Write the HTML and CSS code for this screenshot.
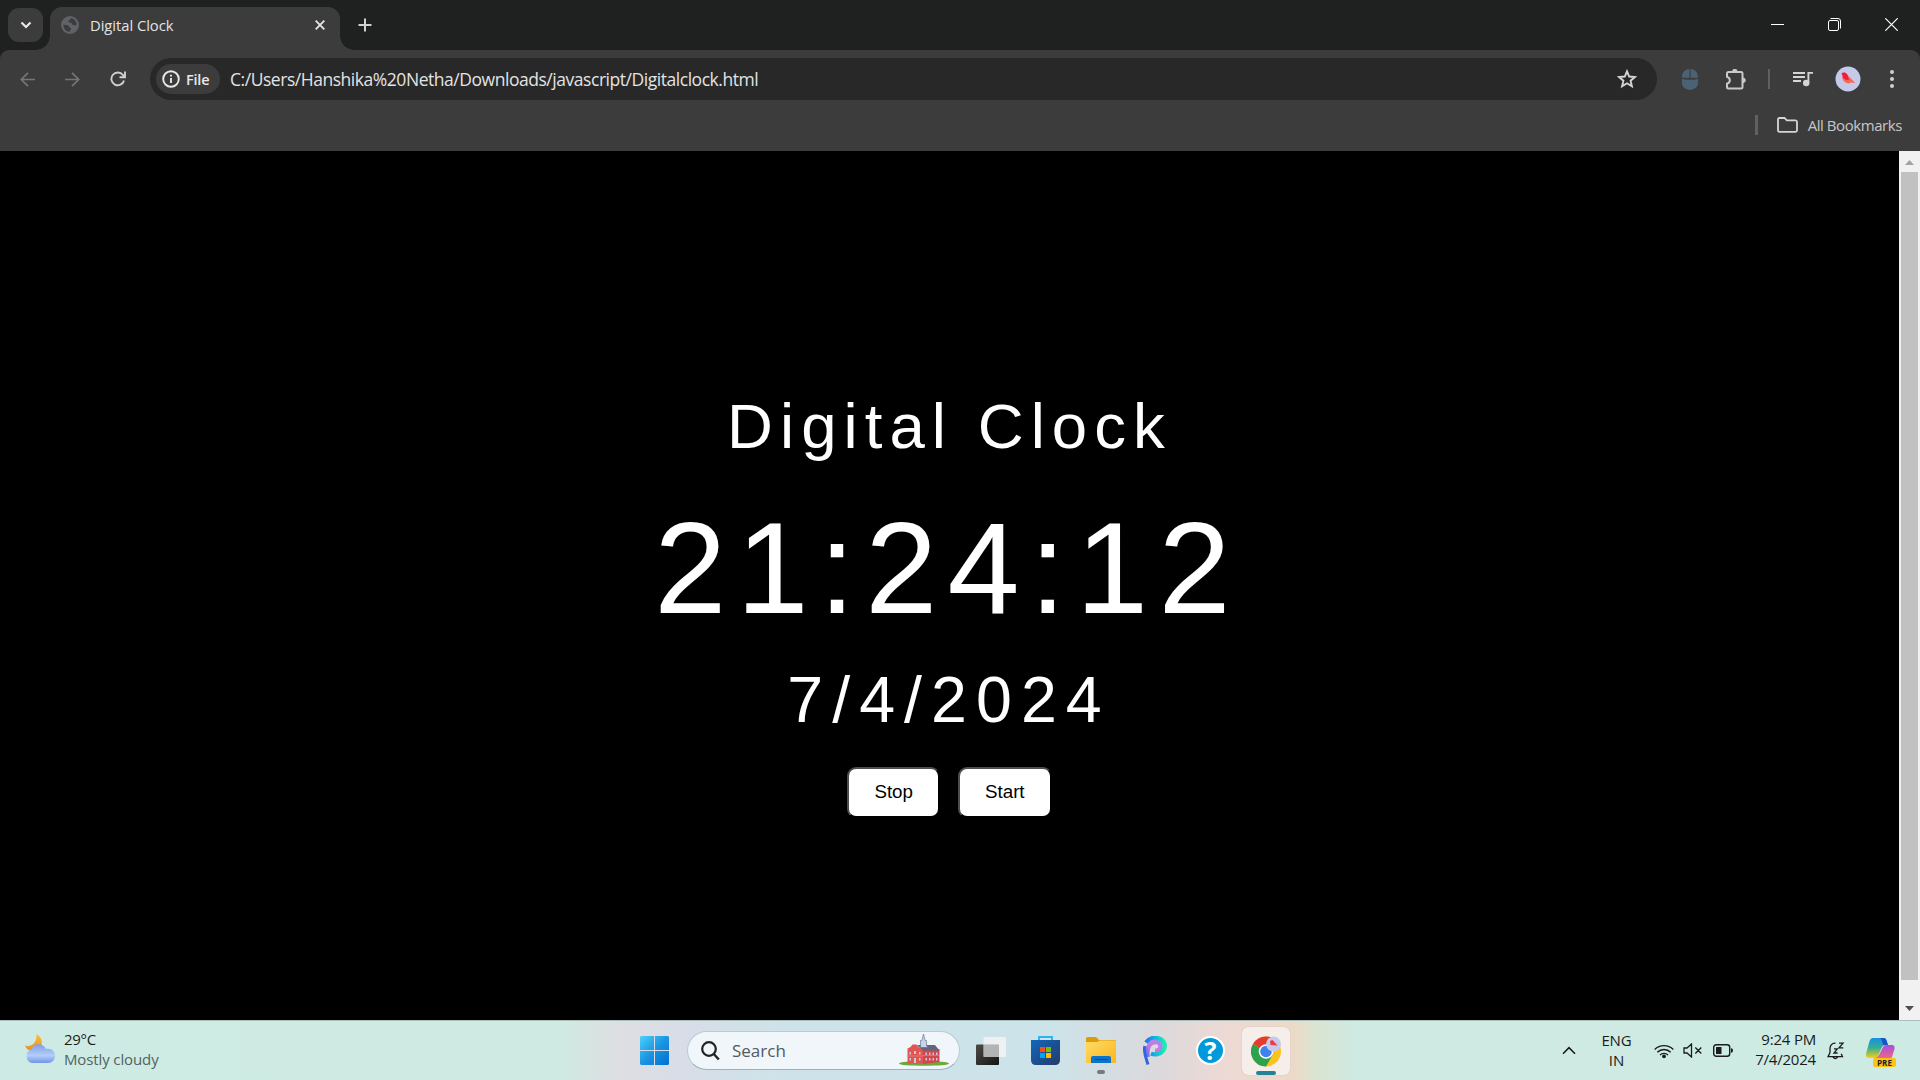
FILE: index.html
```html
<!DOCTYPE html>
<html lang="en">
<head>
<meta charset="utf-8">
<title>Digital Clock</title>
<link rel="stylesheet" href="styles.css">
</head>
<body>
<header class="tabstrip">
  <div class="tab-search"><svg width="12" height="8" viewBox="0 0 12 8"><path d="M1.5 1.5 6 6l4.500-4.500" fill="none" stroke="#e8e8e8" stroke-width="2.200"/></svg></div>
  <div class="tab">
    <svg class="globe" width="18" height="18" viewBox="0 0 18 18"><circle cx="9" cy="9" r="9" fill="#5f6368"/><path d="M2.500 8.500C4 9 7.500 8.800 8 10.500c.3 1.500 1.800.8 2 2.200.1 1-1.200 1.300-1.200 3C5 16 2.200 12.500 2.500 8.500zM9.800 2.200c-1 .8-.8 1.800-2 2.300-1 .4-.4 2 .8 2 1.300 0 2.200.1 2.400 1.500.2 1.200 2 1.400 4.600.9C15.700 5.200 13 2.400 9.800 2.200z" fill="#3c3c3c"/></svg>
    <span class="tab-title">Digital Clock</span>
    <svg class="tab-close" width="10" height="10" viewBox="0 0 10 10"><path d="M.7.7l8.600 8.600M9.300.7.7 9.300" stroke="#e3e3e3" stroke-width="1.900"/></svg>
  </div>
  <svg class="new-tab" width="14" height="14" viewBox="0 0 14 14"><path d="M7 .5v13M.5 7h13" stroke="#d0d0d0" stroke-width="2"/></svg>
  <div class="window-buttons">
    <svg width="13" height="13" viewBox="0 0 13 13"><path d="M0 6.500h13" stroke="#fff"/></svg>
    <svg width="13" height="13" viewBox="0 0 13 13"><rect x=".5" y="2.500" width="10" height="10" rx="1.500" fill="none" stroke="#fff"/><path d="M2.500.5H10A2.500 2.500 0 0 1 12.500 3v7.500" fill="none" stroke="#fff"/></svg>
    <svg width="13" height="13" viewBox="0 0 13 13"><path d="M.3.3l12.400 12.400M12.700.3.3 12.700" stroke="#fff" stroke-width="1.200"/></svg>
  </div>
</header>
<nav class="toolbar">
  <div class="nav-icons">
    <svg width="15" height="15" viewBox="0 0 15 15"><path d="M15 7.500H1.500M8 .8 1.300 7.500 8 14.200" fill="none" stroke="#757575" stroke-width="1.700"/></svg>
    <svg width="15" height="15" viewBox="0 0 15 15"><path d="M0 7.500h13.500M7 .8l6.700 6.700L7 14.200" fill="none" stroke="#757575" stroke-width="1.700"/></svg>
    <svg width="16" height="16" viewBox="0 0 16 16"><path d="M14 9.500A6.400 6.400 0 1 1 12.900 4L14.800 6M9.500 6.200h5.500V.6" fill="none" stroke="#d0d0d0" stroke-width="1.900"/></svg>
  </div>
  <div class="omnibox">
    <div class="chip">
      <svg width="18" height="18" viewBox="0 0 18 18"><circle cx="9" cy="9" r="7.800" fill="none" stroke="#e8e8e8" stroke-width="1.900"/><path d="M9 8v5M9 4.700v1.900" stroke="#e8e8e8" stroke-width="1.900"/></svg>
      <span>File</span>
    </div>
    <span class="url">C:/Users/Hanshika%20Netha/Downloads/javascript/Digitalclock.html</span>
    <svg class="star" width="20" height="20" viewBox="0 0 20 20"><path d="M10 2.300l2.200 5.200 5.700.5-4.300 3.700 1.300 5.500L10 14.300l-4.900 2.900 1.300-5.500L2.100 8l5.700-.5z" fill="none" stroke="#d5d5d5" stroke-width="1.900"/></svg>
  </div>
  <svg class="mouse" width="16" height="21" viewBox="0 0 16 21"><path d="M7.500 0v8.800H0C0 3 3 .3 7.500 0zM8.600 0v8.800H16C16 3 13 .3 8.600 0z" fill="#4b6274"/><path d="M0 9.900c5 1.200 11 1.200 16 0V14c0 9-16 9-16 0z" fill="#4b6274"/></svg>
  <svg class="puzzle" width="22" height="21" viewBox="0 0 22 21"><path d="M2 4.500q0-1.500 1.500-1.500H16q1.500 0 1.500 1.500V18q0 1.500-1.500 1.500H3.500Q2 19.500 2 18v-3.300c3.800-1.200 3.800-5.800 0-7z" fill="none" stroke="#c9c9c9" stroke-width="2"/><path d="M7.500 2.500a2.300 2.300 0 0 1 4.600 0zM18 9a2.300 2.300 0 0 1 0 4.600z" fill="#c9c9c9" stroke="#c9c9c9"/></svg>
  <i class="bar"></i>
  <svg class="music" width="20" height="16" viewBox="0 0 20 16"><path d="M0 2h12M0 6h12M0 10h8M15.400 12V1.900H20" fill="none" stroke="#d5d5d5" stroke-width="1.900"/><circle cx="13.200" cy="12" r="3.200" fill="#d5d5d5"/></svg>
  <svg class="avatar" width="26" height="26" viewBox="0 0 26 26"><circle cx="13" cy="13" r="12.500" fill="#c5caea"/><path d="M6.500 7.500c2-2 5-1.200 6 1.500l5.800 6 1.700 2-4-.5-2.500 1C9 16.800 6.500 13 7.500 9.500z" fill="#fa6650"/><path d="M6.500 7.500c2-2 5-1.200 6 1.500l1.500 5C9 14 8 12 7.500 9.500z" fill="#e7213f"/></svg>
  <svg class="dots" width="4" height="18" viewBox="0 0 4 18"><g fill="#d0d0d0"><circle cx="2" cy="2" r="2"/><circle cx="2" cy="9" r="2"/><circle cx="2" cy="16" r="2"/></g></svg>
</nav>
<div class="bookmarks">
  <i class="bar"></i>
  <svg width="21" height="16" viewBox="0 0 21 16"><path d="M1 2.500Q1 1 2.500 1h5l2.300 2.400h8.700Q20 3.400 20 5v8.300q0 1.500-1.500 1.500h-16Q1 14.800 1 13.300z" fill="none" stroke="#d5d5d5" stroke-width="1.800"/></svg>
  <span>All Bookmarks</span>
</div>
<div class="viewport">
  <main class="clock">
    <div class="heading">Digital Clock</div>
    <div class="time">21:24:12</div>
    <div class="date">7/4/2024</div>
    <div class="actions"><button>Stop</button><button>Start</button></div>
  </main>
  <div class="scrollbar">
    <svg width="21" height="21" viewBox="0 0 21 21"><path d="M6 14l4.500-5 4.500 5z" fill="#a3a3a3"/></svg>
    <div class="thumb"></div>
    <svg width="21" height="21" viewBox="0 0 21 21"><path d="M6 7l4.500 5L15 7z" fill="#505050"/></svg>
  </div>
</div>
<footer class="taskbar">
  <div class="weather">
    <svg width="32" height="32" viewBox="0 0 32 32"><defs><linearGradient id="moon" x1="0" y1="0" x2="0" y2="1"><stop offset="0" stop-color="#f5c33b"/><stop offset="1" stop-color="#f08a24"/></linearGradient><linearGradient id="cloud" x1="0" y1="0" x2="0" y2="1"><stop offset="0" stop-color="#7fa0e6"/><stop offset=".6" stop-color="#b4cdfa"/><stop offset="1" stop-color="#6f96e4"/></linearGradient></defs><path d="M12.500 1c5 3 6.500 8 4.500 13L8 18c-4-.5-6-2.500-7-5.500 7 2 12-3 11.500-11.500z" fill="url(#moon)"/><path d="M8 30a7 7 0 0 1-.5-13.500C9 10 19 9.500 22 16c6-1 9 3 9 7 0 4-3 7-7 7z" fill="url(#cloud)"/></svg>
    <div><div class="temp">29°C</div><div class="sky">Mostly cloudy</div></div>
  </div>
  <div class="apps">
    <svg class="start" width="30" height="30" viewBox="0 0 30 30"><defs><linearGradient id="win" x1="0" y1="0" x2="1" y2="1"><stop offset="0" stop-color="#4cd0fc"/><stop offset=".5" stop-color="#1a95e3"/><stop offset="1" stop-color="#0070d0"/></linearGradient></defs><path d="M1 0h13v14H0V1zM15 0h13l1 1v13H15zM0 15h14v14H1l-1-1zM15 15h14v13l-1 1H15z" fill="url(#win)"/></svg>
    <div class="search">
      <svg width="19" height="20" viewBox="0 0 19 20"><circle cx="8" cy="8" r="6.800" fill="none" stroke="#222" stroke-width="2.200"/><path d="M12.800 13l5 5.500" stroke="#222" stroke-width="2.400"/></svg>
      <span>Search</span>
      <svg class="hall" width="52" height="33" viewBox="0 0 52 33"><ellipse cx="26" cy="29.500" rx="25" ry="2.300" fill="#6ba93a"/><path d="M9.500 14.500l3-1.500 2-2.500h4l2 2.500 4.500 2v14.500H9.500z" fill="#e25550"/><path d="M25 15h16.500v13L25 30z" fill="#d4464a"/><path d="M19 11h18l4.500 5.500L25 16.500z" fill="#62657f"/><path d="M22.500 12V6.500h1.300L25.500 0l1.700 6.500h1.300v5l1.500 2h-8z" fill="#c9d3e8" stroke="#59678c" stroke-width=".6"/><path d="M9.500 22h15.500M25 21.500h16.500" stroke="#f08a80" stroke-width=".6"/><g fill="#c7cbe0"><path d="M11.500 18h1.500v2.500h-1.500zM16 17h2v3h-2zM21 18h1.500v2.500H21zM11.500 24h1.500v2.500h-1.500zM16 24h2v5h-2zM21 24h1.500v2.500H21zM27.500 18.500H29V21h-1.500zM31 18.500h1.500V21H31zM34.500 18.500H36V21h-1.500zM38 18.500h1.500V21H38zM27.500 24H29v2.500h-1.500zM31 24h1.500v2.500H31zM34.500 24H36v2.500h-1.500zM38 24h1.500v2.500H38z"/></g></svg>
    </div>
    <svg class="taskview" width="30" height="28" viewBox="0 0 30 28"><defs><linearGradient id="tv" x1="0" y1="0" x2="1" y2="1"><stop offset="0" stop-color="#4b4b47"/><stop offset="1" stop-color="#151515"/></linearGradient></defs><rect y="7.500" width="23" height="20.500" rx="1" fill="url(#tv)"/><rect x="7.500" width="22.500" height="20" rx="1" fill="#f4f4f4" opacity=".82"/><path d="M7.500 7.500H23V20H7.500z" fill="#a5a5a5" opacity=".65"/></svg>
    <svg class="store" width="29" height="29" viewBox="0 0 29 29"><defs><linearGradient id="st" x1="0" y1="0" x2="1" y2="1"><stop offset="0" stop-color="#1267bd"/><stop offset="1" stop-color="#263a68"/></linearGradient></defs><path d="M8 6V1h13v5" fill="none" stroke="#2bb7ee" stroke-width="2"/><path d="M0 4h29v20q0 5-5 5H5q-5 0-5-5z" fill="url(#st)"/><path d="M9 11h5v5H9z" fill="#f25022"/><path d="M15 11h5v5h-5z" fill="#7fba00"/><path d="M9 17h5v5H9z" fill="#00a4ef"/><path d="M15 17h5v5h-5z" fill="#ffb900"/></svg>
    <div class="app folder"><svg width="30" height="27" viewBox="0 0 30 27"><defs><linearGradient id="fo" x1="0" y1="0" x2="1" y2="1"><stop offset="0" stop-color="#ffdb66"/><stop offset="1" stop-color="#fbb51e"/></linearGradient></defs><path d="M0 1.500Q0 0 1.500 0H10l3 3h17v8H0z" fill="#dd9b0a"/><path d="M0 5h11l3-1.500h16V26H0z" fill="url(#fo)"/><path d="M5 26v-5q0-2 2-2h16q2 0 2 2v5z" fill="#0b73c9"/><path d="M9 22.500h12.500" stroke="#064b90"/></svg><i></i></div>
    <svg class="loop" width="24" height="29" viewBox="0 0 24 29"><defs><linearGradient id="lo" x1="0" y1="0" x2="1" y2="0"><stop offset="0" stop-color="#2a6fe8"/><stop offset=".5" stop-color="#11b8e0"/><stop offset="1" stop-color="#17f0b0"/></linearGradient><linearGradient id="lp" x1="0" y1="1" x2="1" y2="0"><stop offset="0" stop-color="#5a78ea"/><stop offset=".5" stop-color="#d573dd"/><stop offset="1" stop-color="#a08af0"/></linearGradient></defs><path d="M4.500 21C3.500 11 7 6 12.500 6c4.500 0 6 3.500 4.500 6.500-1 2-3 2.500-5 2.300" fill="none" stroke="url(#lp)" stroke-width="4.500"/><path d="M3 6.500C7 1 12.500 1.200 15.500 2.200c6.500 2 8 8.300 4.500 12.800-2.800 3.500-8 4.200-12 2.600" fill="none" stroke="url(#lo)" stroke-width="4.200"/><path d="M5 28.500C3.500 23 .2 17 1.800 10" fill="none" stroke="#3563e6" stroke-width="3"/></svg>
    <div class="help">?</div>
    <div class="chrome"><svg width="31" height="31" viewBox="0 0 31 31"><circle cx="15" cy="15.500" r="15" fill="#fcc31e"/><path d="M15 15.500L2 8A15 15 0 0 1 28 8z" fill="#e33b2e"/><path d="M15 15.500L2 8A15 15 0 0 0 15 30.500L21.500 19z" fill="#2da14b"/><circle cx="15" cy="15.500" r="7.300" fill="#fff"/><circle cx="15" cy="15.500" r="5.800" fill="#3f82ee"/><circle cx="22.500" cy="8" r="7.500" fill="#c5caea"/><path d="M19 5l2.500-1 5 5.500-7-.5z" fill="#ef3946"/></svg><i></i></div>
  </div>
  <div class="tray">
    <svg class="chevron" width="14" height="9" viewBox="0 0 14 9"><path d="M1 7.700L7 1.600l6 6.100" fill="none" stroke="#1b1b1b" stroke-width="1.600"/></svg>
    <div class="lang">ENG<br>IN</div>
    <svg class="wifi" width="20" height="16" viewBox="0 0 20 16"><g fill="none" stroke="#1b1b1b" stroke-width="1.400"><path d="M.7 6.500a13 13 0 0 1 18.600 0M3.300 9.300a9.400 9.400 0 0 1 13.400 0M6 12a5.700 5.700 0 0 1 8 0"/></g><circle cx="10" cy="13.300" r="1.900" fill="#1b1b1b"/></svg>
    <svg class="mute" width="19" height="15" viewBox="0 0 19 15"><path d="M1 5h3l4.500-4v13L4 10H1zM12.300 4.500l6 6M18.300 4.500l-6 6" fill="none" stroke="#1b1b1b" stroke-width="1.300"/></svg>
    <svg class="battery" width="20" height="13" viewBox="0 0 20 13"><rect x=".7" y=".7" width="16" height="11.600" rx="2.500" fill="none" stroke="#1b1b1b" stroke-width="1.400"/><rect x="3" y="3" width="5.500" height="7" rx=".5" fill="#1b1b1b"/><path d="M18 4.200q2 0 2 2.300t-2 2.300z" fill="#1b1b1b"/></svg>
    <div class="stamp">9:24 PM<br>7/4/2024</div>
    <svg class="bell" width="18" height="18" viewBox="0 0 18 18"><path d="M8.500 1.200C4.500 1 3 4 3 6.500v4L1 14.700h14.500l-1.300-3M6 15.200q2.300 2.800 4.600 0M7 6.800h3.300L7 11h3.600M12 1.200h4L12 5.800h4.300" fill="none" stroke="#1b1b1b" stroke-width="1.300"/></svg>
    <div class="copilot"><svg width="29" height="22" viewBox="0 0 29 22"><defs><linearGradient id="ca" x1="0" y1="0" x2="0" y2="1"><stop offset="0" stop-color="#178ee8"/><stop offset=".5" stop-color="#38af8e"/><stop offset="1" stop-color="#f8cf16"/></linearGradient><linearGradient id="cb" x1="0" y1="0" x2="0" y2="1"><stop offset="0" stop-color="#a84ee3"/><stop offset="1" stop-color="#f76c75"/></linearGradient></defs><path d="M7 0h11q2 0 3 4l1 3q-5-1-7 4l-3 7q-1 2-3 2H3q-4 0-3-4L3 5q1-5 4-5z" fill="url(#ca)"/><path d="M14 0h4q2 0 3 4l1 3h-5q-1-6-3-7z" fill="#1755c8"/><path d="M20 7h6q3 0 2.500 4L26 19q-1 3-4 3H11q-3 0-3-2 4 0 6-5l3-6q1-2 3-2z" fill="url(#cb)"/></svg><b>PRE</b></div>
  </div>
</footer>
</body>
</html>
```
FILE: styles.css
```css
* { box-sizing: border-box; }
body { margin: 0; width: 1920px; height: 1080px; overflow: hidden; display: flex; flex-direction: column; background: #1f2120; font-family: "Open Sans", "Noto Sans", sans-serif; }
svg { display: block; flex: none; }
span, .sky, .temp { white-space: nowrap; }

.tabstrip { height: 50px; flex: none; display: flex; padding-left: 8px; }
.tab-search { width: 35px; height: 34px; margin: 8px 7px 0 0; border-radius: 11px; background: #3c3c3c; display: grid; place-items: center; }
.tab { position: relative; width: 290px; height: 43px; margin-top: 7px; border-radius: 12px 12px 0 0; background: #3c3c3c; display: flex; align-items: center; padding: 0 15px 7px 11px; }
.tab::before, .tab::after { content: ""; position: absolute; bottom: 0; width: 14px; height: 14px; }
.tab::before { left: -14px; background: radial-gradient(circle at 0 0, transparent 13.500px, #3c3c3c 14px); }
.tab::after { right: -14px; background: radial-gradient(circle at 100% 0, transparent 13.500px, #3c3c3c 14px); }
.tab-title { margin-left: 11px; font-size: 14.800px; letter-spacing: -.05px; color: #e3e3e3; flex: 1; }
.new-tab { margin: 18px 0 0 18px; }
.window-buttons { margin: 18px 22px 0 auto; display: flex; gap: 44px; }

.toolbar { height: 58px; flex: none; display: flex; align-items: center; background: #3c3c3c; border-radius: 9px 9px 0 0; padding-left: 20px; }
.nav-icons { display: flex; align-items: center; gap: 30px; width: 130px; }
.omnibox { width: 1507px; height: 42px; border-radius: 21px; background: #282828; display: flex; align-items: center; padding: 0 20px 0 6px; }
.chip { width: 64px; height: 30px; border-radius: 15px; background: #3c3c3c; display: flex; align-items: center; padding-left: 6px; gap: 6px; color: #e8e8e8; font-size: 14.500px; font-weight: 600; letter-spacing: -.2px; }
.url { flex: 1; margin-left: 10px; font-size: 17.500px; letter-spacing: -.46px; color: #e3e3e3; }
.mouse { margin-left: 25px; }
.puzzle { margin: 0 21px 0 27px; }
.bar { width: 2px; height: 20px; background: #606060; }
.music { margin: 0 22px 0 23px; }
.avatar { margin-right: 29px; }

.bookmarks { height: 43px; flex: none; display: flex; align-items: center; justify-content: flex-end; padding: 0 18px 9px 0; background: #3c3c3c; color: #c7c7c7; font-size: 15px; }
.bookmarks .bar { width: 3px; margin-right: 19px; }
.bookmarks span { margin-left: 10px; letter-spacing: -.43px; }

.viewport { height: 869px; flex: none; display: flex; background: #000; }
.clock { flex: 1; display: flex; flex-direction: column; align-items: center; padding-top: 239px; color: #fff; font-family: "Liberation Sans", Arial, sans-serif; }
.heading { font-size: 63.500px; line-height: 72px; letter-spacing: 7.070px; }
.time { font-size: 129.500px; line-height: 144px; letter-spacing: 10.300px; margin: 34px 4px 0 0; }
.date { font-size: 64.500px; line-height: 72px; letter-spacing: 9.050px; margin: 24px 1px 0 0; }
.actions { display: flex; gap: 18px; margin-top: 31px; }
.actions button { height: 51px; padding: 0 25px; border: 2px solid; border-color: #4d4d4d #000 #000 #4d4d4d; border-radius: 9px; background: #fff; color: #000; font: 18.750px/1 "Liberation Sans", Arial, sans-serif; }
.scrollbar { width: 21px; background: #f1f1f1; display: flex; flex-direction: column; }
.thumb { flex: 1; margin: 0 2px 19px; background: #c1c1c1; }

.taskbar { height: 60px; flex: none; display: flex; border-top: 1px solid #abc0bc; color: #1b1b1b; background: linear-gradient(90deg, #cdebe4 0, #cfeae3 560px, #dedee1 620px, #d8dde8 680px, #cee3e9 780px, #cce3e9 1050px, #dcd9dc 1160px, #ecd9d5 1220px, #ecdac8 1295px, #dbe4d2 1315px, #cfeae2 1355px, #cdebe4 100%); }
.weather { width: 640px; display: flex; padding: 11px 0 0 24px; gap: 8px; font-size: 15px; line-height: 20px; }
.weather > div { margin-top: -3px; }
.weather svg { margin-top: 1px; }
.temp { letter-spacing: -.3px; }
.sky { color: #52635f; letter-spacing: -.12px; }
.apps { display: flex; align-items: center; height: 59px; }
.start { margin-right: 17px; }
.search { width: 273px; height: 39px; border-radius: 20px; background: #f0f6f9; border: 1px solid #b9ccd2; border-bottom-color: #a0b0b6; display: flex; align-items: center; padding: 0 9px 0 13px; font-size: 17px; color: #525b5f; }
.search span { flex: 1; margin-left: 12px; }
.taskview { margin: 0 25px 0 16px; }
.app { height: 59px; margin: 0 27px 0 26px; display: flex; flex-direction: column; align-items: center; padding-top: 16px; }
.app i { width: 8px; height: 4px; border-radius: 2px; background: #747b7e; margin-top: 6px; }
.help { width: 29px; height: 29px; margin: 0 17px 0 29px; border-radius: 50%; border: 2px solid #fff; background: #0099db; color: #fff; font: bold 25px/25px "Open Sans", sans-serif; text-align: center; }
.chrome { width: 48px; height: 48px; border-radius: 6px; background: #f6eeea; box-shadow: 0 0 1px #b8aaa8; display: flex; flex-direction: column; align-items: center; padding-top: 9px; }
.chrome i { width: 20px; height: 4px; border-radius: 2px; background: #238297; margin-top: 4px; }
.tray { margin-left: auto; display: flex; align-items: center; font-size: 15px; line-height: 20px; padding-right: 24px; }
.lang { width: 40px; margin: -2px 17.500px 0 21px; text-align: center; letter-spacing: -.1px; }
.mute { margin: 0 11px 0 9px; }
.stamp { width: 64px; margin: -3px 11px 0 19px; text-align: right; letter-spacing: -.2px; white-space: nowrap; }
.copilot { width: 30px; height: 29px; margin: 3px 0 0 21px; position: relative; }
.copilot b { position: absolute; left: 7px; bottom: 0; width: 23px; height: 9px; border-radius: 2px; background: #fcc419; font-size: 8px; line-height: 9px; text-align: center; color: #222; }
```
